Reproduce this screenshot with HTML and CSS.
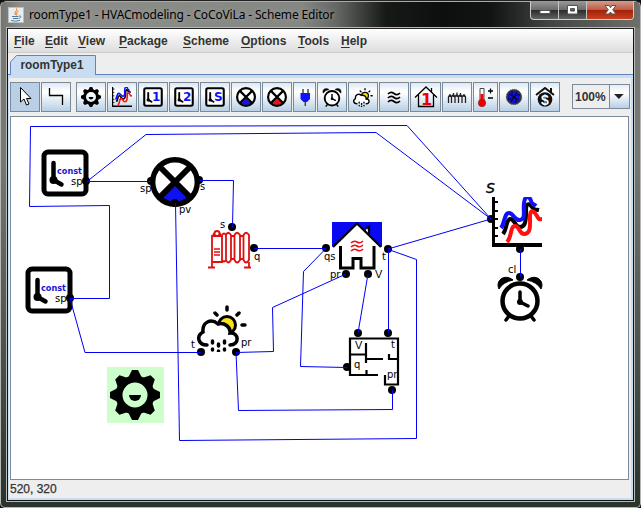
FILE: index.html
```html
<!DOCTYPE html>
<html lang="en">
<head>
<meta charset="utf-8">
<title>roomType1 - HVACmodeling - CoCoViLa - Scheme Editor</title>
<link rel="stylesheet" href="styles.css">
</head>
<body>
<svg class="defs" aria-hidden="true">
  <symbol id="gear" viewBox="-25 -25 50 50">
    <path d="M-7-17L-3-25H3L7-17ZM-7 17L-3 25H3L7 17Z"/><path d="M-7-17L-3-25H3L7-17ZM-7 17L-3 25H3L7 17Z" transform="rotate(45)"/><path d="M-7-17L-3-25H3L7-17ZM-7 17L-3 25H3L7 17Z" transform="rotate(90)"/><path d="M-7-17L-3-25H3L7-17ZM-7 17L-3 25H3L7 17Z" transform="rotate(135)"/>
    <circle r="16" fill="none" stroke="#000" stroke-width="7"/>
    <path d="M-6 0H6A6 6 0 0 1-6 0Z"/>
  </symbol>
  <symbol id="chart" viewBox="0 0 50 50">
    <g fill="none" stroke-width="4" stroke-linejoin="round">
      <path d="M11 37C15 32 14 23 18 22S23 30 28 30S34 25 34 15S37 6 40 10S43 12 47 13" stroke="#000"/>
      <path d="M9 31C13 26 12 16 17 16S22 24 28 23S31 15 32 6S38 0 39 4S41 6 44 9" stroke="#1010ff"/>
      <path d="M15 45C20 40 18 29 23 29S27 38 33 37S38 29 38 20S42 14 45 19S46 22 50 22" stroke="#f11"/>
    </g>
    <path d="M0 0H3V46H50V50H0ZM3 4H6V6H3ZM3 13H6V15H3ZM3 21H6V23H3ZM3 30H6V32H3ZM3 38H6V40H3Z"/>
  </symbol>
  <symbol id="dial" viewBox="0 0 48 48">
    <rect x="3" y="3" width="42" height="42" rx="4" fill="#fff" stroke="#000" stroke-width="5"/>
    <path d="M12.500 14V31L20.500 35.500" fill="none" stroke="#000" stroke-width="4.500" stroke-linecap="round"/><circle cx="12.500" cy="31" r="4"/>
  </symbol>
  <symbol id="valve" viewBox="0 0 50 50">
    <circle cx="25" cy="25" r="22" fill="#fff"/>
    <path d="M25 28L12 41Q25 49 38 41Z" fill="currentColor"/>
    <path d="M10 10L40 40M40 10L10 40" stroke="#000" stroke-width="6"/>
    <circle cx="25" cy="25" r="22.300" fill="none" stroke="#000" stroke-width="5.400"/>
  </symbol>
  <symbol id="alarm" viewBox="0 0 46 48">
    <path d="M2 15C-2 7 7-1 16 6Q6 8 2 15ZM44 15C48 7 39-1 30 6Q40 8 44 15Z" stroke="#000"/>
    <circle cx="23" cy="27" r="17.500" fill="#fff" stroke="#000" stroke-width="4.500"/>
    <path d="M23 18V28L31 32M12 42L9 46M34 42L37 46" fill="none" stroke="#000" stroke-width="3.500" stroke-linecap="round"/>
    <circle cx="23" cy="28" r="3"/>
  </symbol>
  <symbol id="weather" viewBox="0 0 50 48">
    <circle cx="30" cy="21" r="8.500" fill="#f8e414" stroke="#000" stroke-width="3"/>
    <path d="M10 41C3 40 0 32 6 27C6 19 14 14 21 20C27 19 33 24 32 30C41 30 43 40 33 41" fill="#fff"/>
    <path d="M10 41C1 41-1 32 6 28C5 18 14 14 21 20C27 18 34 23 33 29C42 28 43 41 33 41" fill="none" stroke="#000" stroke-width="3.500" stroke-linecap="round"/>
    <path d="M30 3V6M18 9L20 11M42 9L40 11M45 21H48M15.500 37V39M21.500 40V42M27.500 37V39M15.500 45V46M21.500 47V47.500M27.500 45V46" stroke="#000" stroke-width="3.500" stroke-linecap="round"/>
  </symbol>
</svg>
<div class="window">
  <header class="titlebar">
    <svg class="java" viewBox="0 0 16 16"><path d="M.5.500H15.500V15.500H.5Z" fill="#e9edf0" stroke="#b8c0c8"/><path d="M8.500 1.500C10 4 5.500 4.500 7.500 8M10.500 4C7.500 5.500 9.500 6 8.500 8.500" fill="none" stroke="#e76f00"/><path d="M4 9.500H10.500M11 9C14 8.500 13 11 10.500 11.500M5 11.500H10M3 13.500Q8 15 12 13.300" fill="none" stroke="#527b9c"/></svg>
    <h1 class="title">roomType1 - HVACmodeling - CoCoViLa - Scheme Editor</h1>
    <div class="controls">
      <svg class="control" viewBox="0 0 27 17"><rect x="9" y="9" width="10" height="3" fill="#fff" stroke="#555"/></svg>
      <svg class="control" viewBox="0 0 27 17"><path d="M8.500 4H18.500V12.500H8.500ZM11.500 7V9.500H15.500V7Z" fill="#fff" fill-rule="evenodd" stroke="#555"/></svg>
      <svg class="control close" viewBox="0 0 46 17"><path d="M18 4H22L23.500 6.200L25 4H29L25.700 8.300L29 12.500H25L23.500 10.500L22 12.500H18L21.300 8.300Z" fill="#fff" stroke="#555"/></svg>
    </div>
  </header>
  <main class="client">
    <nav class="menubar">
      <span class="m-file"><u>F</u>ile</span><span class="m-edit"><u>E</u>dit</span><span class="m-view"><u>V</u>iew</span><span class="m-package"><u>P</u>ackage</span><span class="m-scheme"><u>S</u>cheme</span><span class="m-options"><u>O</u>ptions</span><span class="m-tools"><u>T</u>ools</span><span><u>H</u>elp</span>
    </nav>
    <div class="tabs">
      <svg class="tab" viewBox="0 0 86 20"><path d="M.5 20V7L6.500.500H85.500V20" fill="#c8ddf2" stroke="#6382bf"/><text x="10.500" y="14" textLength="63" lengthAdjust="spacingAndGlyphs">roomType1</text></svg>
    </div>
    <section class="pane">
      <div class="toolbar">
        <div class="tool selected"><svg class="icon" viewBox="0 0 20 20"><path d="M5.500.500V15L9 12L11.500 18L14 17L11.500 11.500H16Z" fill="#fff" stroke="#000"/></svg></div>
        <div class="tool"><svg class="icon" viewBox="0 0 20 20"><path d="M3.500 1V8.500H16.500V18" fill="none" stroke="#000" stroke-width="1.300"/></svg></div>
        <div class="tool first"><svg class="icon"><use href="#gear"/></svg></div>
        <div class="tool"><svg class="icon"><use href="#chart"/></svg></div>
        <div class="tool"><svg class="icon" viewBox="0 0 20 20"><use href="#dial" width="20" height="20"/><text class="mark" x="9" y="13.500">1</text></svg></div>
        <div class="tool"><svg class="icon" viewBox="0 0 20 20"><use href="#dial" width="20" height="20"/><text class="mark" x="9" y="13.500">2</text></svg></div>
        <div class="tool"><svg class="icon" viewBox="0 0 20 20"><use href="#dial" width="20" height="20"/><text class="mark" x="9" y="13.500">S</text></svg></div>
        <div class="tool"><svg class="icon blue"><use href="#valve"/></svg></div>
        <div class="tool"><svg class="icon red"><use href="#valve"/></svg></div>
        <div class="tool plug"><svg class="icon" viewBox="0 0 20 20"><path d="M8 2V8M13 2V8" stroke="#444" stroke-width="1.500"/><path d="M5.500 6H15V12L12 15H8.500L5.500 12Z" fill="#11f"/><path d="M10.300 15V19" stroke="#445" stroke-width="1.500"/></svg></div>
        <div class="tool"><svg class="icon"><use href="#alarm"/></svg></div>
        <div class="tool"><svg class="icon"><use href="#weather"/></svg></div>
        <div class="tool"><svg class="icon" viewBox="0 0 20 20"><path d="M4 7Q7 4 10 6.500T16 6M4 11Q7 8 10 10.500T16 10M4 15Q7 12 10 14.500T16 14" fill="none" stroke="#000" stroke-width="1.700"/></svg></div>
        <div class="tool house"><svg class="icon wide" viewBox="0 0 26 22"><path d="M2 11.500L13 1L24 11.500M5.500 9V20.500H20.500V9M18.500 2V6" fill="none" stroke="#000" stroke-width="1.300"/><text class="mark one" x="8" y="19">1</text></svg></div>
        <div class="tool"><svg class="icon" viewBox="0 0 20 20"><path d="M1.500 16V10Q3 6.500 4.500 10V16M4.500 10Q6.500 6 8 10V16M8 10Q10 5.500 11.500 10V16M11.500 10Q13.500 6 15 10V16M15 10Q17 6.500 18.500 10V16M3 7V10M6.500 6V10M10 5.500V10M13.500 6V10M17 7V10" fill="none" stroke="#222" stroke-width="1.300"/></svg></div>
        <div class="tool thermo"><svg class="icon" viewBox="0 0 20 20"><path d="M4 14V1.500H8V14" fill="#fff" stroke="#444"/><path d="M6 7V16" stroke="#f00" stroke-width="3"/><circle cx="6" cy="16" r="3.700" fill="#e00" stroke="#722" stroke-width=".6"/><path d="M12 4H17M14.500 1.500V6.500M12 11H17" stroke="#000" stroke-width="1.300"/></svg></div>
        <div class="tool"><svg class="icon" viewBox="0 0 20 20"><circle cx="10" cy="10" r="7" fill="#11d" stroke="#333" stroke-width="1.700"/><circle cx="10" cy="10" r="7.700" fill="none" stroke="#555" stroke-dasharray="1 1"/><path d="M10 10Q7 8 8 4M10 10Q12 7 16 8M10 10Q13 12 12 16M10 10Q8 13 4 12M10 10L5 7M10 10L13 5M10 10L15 13M10 10L7 15" fill="none" stroke="#000" stroke-width=".8"/></svg></div>
        <div class="tool"><svg class="icon" viewBox="0 0 20 20"><path d="M1 8L10 1L19 8M16 1V5" fill="none" stroke="#111" stroke-width="2"/><circle cx="10" cy="12.500" r="7.300" fill="#111"/><text class="dollar" x="6" y="17.500">$</text></svg></div>
        <div class="zoom"><span class="value">100%</span><svg class="arrow" viewBox="0 0 19 24"><path d="M4 9.500H14L9 14.500Z" fill="#222"/></svg></div>
      </div>
      <svg class="scheme" viewBox="11 117 617 362">
        <rect x="107" y="367" width="57" height="56" fill="#cfc"/>
        <use href="#gear" x="110" y="370" width="50" height="50"/>
        <use href="#dial" x="41" y="149" width="48" height="48"/>
        <use href="#dial" x="25" y="266" width="48" height="48"/>
        <use class="blue" href="#valve" x="150" y="157" width="50" height="50"/>
        <use href="#weather" x="197" y="304" width="50" height="48"/>
        <use href="#chart" x="492" y="197" width="50" height="50"/>
        <use href="#alarm" x="497" y="274" width="46" height="48"/>
        <g fill="none" stroke="#de1010" stroke-width="1.800">
          <path d="M212 267V236H222V262H212M213 235L215 232.500H219L221 235"/>
          <path d="M226 235Q228 230.500 231 235V260Q228 265 226 260ZM234.500 235Q237 230.500 240 235V260Q237 265 234.500 260ZM243.500 235Q246 230.500 249 235V260Q246 265 243.500 260Z" fill="#fff"/>
          <path d="M222 235Q224 232 226 235M222 260Q224 263 226 260M231 236H234.500M231 259H234.500M240 236H243.500M240 259H243.500M249 262V267M208 267.500H215M244 267.500H251"/><path d="M214 249H220M214 252H220M214 255H220" stroke-width="1.400"/>
          <circle cx="217" cy="233.500" r="2.500" fill="#fff"/>
        </g>
        <path d="M332 222H382V247L357 224L332 247Z" fill="#0808f4"/>
        <path d="M366 231V227H369V235Z" fill="#fff"/>
        <path d="M333 247L357 223.500L381 247M366 228.500L369 226.500V234" fill="none" stroke="#000" stroke-width="2.300"/>
        <path d="M340.500 246V268H353V258.500H361V268H374V246" fill="none" stroke="#000" stroke-width="3"/>
        <path d="M351 243Q354 240 357 242T363 241M351 247Q354 244 357 246T363 245M351 251Q354 248 357 250T363 249" fill="none" stroke="#e11" stroke-width="1.600"/>
        <path d="M378 375H350V338.500H398V384.500H385V375M350 354.500H366M366 343V363M366 359H383M389 354V359H398M366.500 370V375" fill="none" stroke="#000" stroke-width="2.200"/>
        <g class="ports">
          <circle cx="86" cy="181" r="4"/><circle cx="70" cy="298" r="4"/><circle cx="151" cy="181" r="4"/><circle cx="199" cy="180" r="4"/><circle cx="175" cy="203" r="4"/><circle cx="232" cy="227" r="4"/><circle cx="254" cy="248" r="4"/><circle cx="326" cy="248" r="4"/><circle cx="388" cy="249" r="4"/><circle cx="346" cy="274" r="4"/><circle cx="368" cy="274" r="4"/><circle cx="358" cy="333" r="4"/><circle cx="388" cy="333" r="4"/><circle cx="347" cy="367" r="4"/><circle cx="392" cy="390" r="4"/><circle cx="201" cy="352" r="4"/><circle cx="236" cy="352" r="4"/><circle cx="491" cy="219" r="4"/><circle cx="520" cy="249" r="4"/><circle cx="520" cy="277" r="4"/>
        </g>
        <g class="wires">
          <path d="M87 181.500H151"/><path d="M87 181.500L146 134.500L376 132.500L491 219L407 125.500L30.500 126.500L29.500 206.500L109.500 205.500V298.500H70L85 352.500H201"/>
          <path d="M199 180.500H233.500L232.500 227"/><path d="M175.500 203L179.500 440.500L416.500 438.500V259.500L388.500 249.500V333"/><path d="M388 249L491 219"/>
          <path d="M254 248.500H326L303.500 271.500L300.500 366.500L347 367.500"/><path d="M346 274L272.500 307.500L273.500 351.500L236 352.500L238.500 410.500L392.500 409.500V390"/><path d="M368 274L358 333M520.500 249V277"/>
        </g>
        <g class="labels">
          <text x="71" y="184.500">sp</text><text x="55" y="301.500">sp</text><text x="140" y="192">sp</text><text x="200" y="190">s</text><text x="179" y="213">pv</text><text x="220" y="228">s</text><text x="254" y="260">q</text><text x="324" y="260">qs</text><text x="382" y="260">t</text><text x="330" y="278">pr</text><text class="volume" x="375" y="278">V</text><text x="191" y="348">t</text><text x="241" y="346">pr</text><text class="volume" x="355" y="349">V</text><text x="391" y="348">t</text><text x="354" y="368">q</text><text x="387" y="378">pr</text><text x="508" y="273">cl</text>
          <text class="const" x="57" y="174" textLength="25" lengthAdjust="spacingAndGlyphs">const</text><text class="const" x="41" y="291" textLength="25" lengthAdjust="spacingAndGlyphs">const</text><text class="series" x="486" y="193">S</text>
        </g>
      </svg>
      <footer class="status">520, 320</footer>
    </section>
  </main>
</div>
</body>
</html>
```
FILE: styles.css
```css
* { box-sizing: border-box; }
body { margin: 0; background: #111; font-family: "Liberation Sans", Arial, sans-serif; }
.defs { position: absolute; width: 0; height: 0; }
.window {
  width: 641px; height: 508px; padding: 1px 6px 6px; overflow: hidden;
  border: 1px solid #b5b8b5; border-top-color: #222; border-radius: 7px 7px 5px 5px;
  background: linear-gradient(#77797600, #777976 30%, #353c36 90%, #29332b), #777;
  display: flex; flex-direction: column;
}
.titlebar {
  height: 27px; margin: -1px -6px 0; padding-left: 7px; flex: none; display: flex; align-items: flex-start;
  border-top: 1px solid #aaa;
  background: linear-gradient(90deg, #73736f 0, #8d8f8b 20px, #858783 300px, #656864 335px, #161a17 385px, #0c0f0e 440px, #111413 490px, #424542 550px, #6c6f6a 639px);
}
.java { width: 16px; height: 16px; margin-top: 5px; }
.title { margin: 3px 0 0 5px; width: 312px; font: 12px/20px "Noto Sans", sans-serif; letter-spacing: -.15px; white-space: nowrap; color: #000; text-shadow: 0 0 5px #aaa; }
.controls { display: flex; width: 104px; height: 19px; margin: -1px 6px 0 auto; border: 1px solid #ccc; border-top: 0; border-radius: 0 0 4px 4px; overflow: hidden; background: linear-gradient(#999, #6c6c6c 48%, #292b2a 50%, #5f6260); }
.control { width: 28px; height: 18px; border-right: 1px solid #c5c5c5; }
.close { width: 46px; border: 0; background: linear-gradient(#d59b8b, #bd5d47 48%, #a32107 50%, #c64120); }
.client { flex: 1; min-height: 0; display: flex; flex-direction: column; border: 1px solid #111; border-top-color: #222; outline: 1px solid #b8bab8; background: #eee; }
.menubar { height: 24px; flex: none; padding-left: 6px; display: flex; align-items: center; font-size: 12px; font-weight: bold; color: #333; border-bottom: 1px solid #ccc; background: linear-gradient(#fff, #ddd); }
.menubar u { text-underline-offset: 2px; text-decoration-thickness: 1px; }
.m-file { width: 31px; } .m-edit { width: 33px; } .m-view { width: 41px; } .m-package { width: 64px; }
.m-scheme { width: 58px; } .m-options { width: 57px; } .m-tools { width: 43px; }
.tabs { height: 22px; flex: none; padding: 2px 0 0 2px; border-bottom: 1px solid #6382bf; }
.tab { display: block; width: 86px; height: 20px; }
.tab text { font-size: 12px; font-weight: bold; fill: #333; }
.pane { flex: 1; min-height: 0; display: flex; flex-direction: column; border: solid #c8ddf2; border-width: 3px 2px 2px 1px; padding-left: 1px; }
.toolbar { height: 38px; flex: none; padding: 4px 0 0; display: flex; align-items: flex-start; gap: 1px; }
.tool { width: 30px; height: 30px; display: flex; align-items: center; justify-content: center; border: 1px solid #7a8a99; background: linear-gradient(#dde8f3, #fff 30%, #fff 35%, #b8cfe5); }
.selected { background: #b8cfe5; }
.first { margin-left: 4px; }
.plug { width: 23px; } .house { width: 31px; } .thermo { width: 25px; }
.icon { width: 20px; height: 20px; flex: none; }
.wide { width: 26px; height: 22px; }
.blue { color: #1010f4; } .red { color: #e11; }
.mark { font: bold 12px "DejaVu Sans", sans-serif; fill: #1010f4; }
.one { font-size: 16px; fill: #e00; }
.dollar { font: bold 14px "Liberation Sans", sans-serif; fill: #fff; }
.zoom { width: 58px; height: 25px; margin: 2px 0 0 11px; display: flex; border: 1px solid #7a8a99; }
.value { width: 37px; padding-left: 2px; font-size: 12px; line-height: 24px; font-weight: bold; color: #333; }
.arrow { width: 20px; height: 23px; border-left: 1px solid #7a8a99; background: linear-gradient(#e5eef7, #fff 35%, #b8cfe5); }
.scheme { display: block; width: 619px; height: 364px; flex: none; border: 1px solid #7a8a99; background: #fff; }
.wires { fill: none; stroke: #0000f5; stroke-width: 1; }
.labels text { font: 10px "DejaVu Sans", sans-serif; fill: #000; }
.labels .volume { font: 11px "Liberation Sans", sans-serif; }
.labels .const { font: bold 8px "DejaVu Sans", sans-serif; fill: #1717d5; }
.labels .series { font: italic 14px "DejaVu Sans", sans-serif; stroke: #000; stroke-width: .4; }
.status { font-size: 12px; line-height: 19px; color: #333; -webkit-text-stroke: .25px #333; }
```
